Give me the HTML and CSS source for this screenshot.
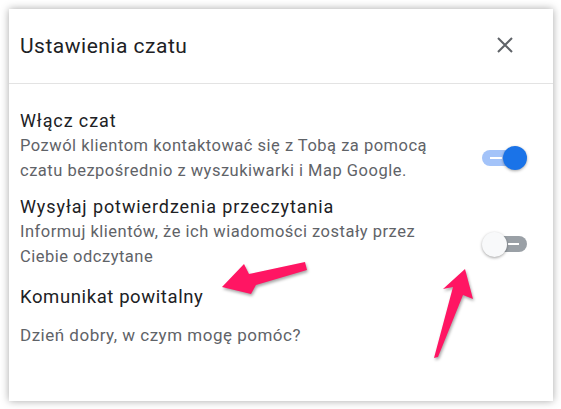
FILE: index.html
```html
<!DOCTYPE html>
<html lang="pl">
<head>
    <meta charset="UTF-8">
    <meta name="viewport" content="width=device-width, initial-scale=1.0">
    <title>Ustawienia czatu</title>
    <link rel="stylesheet" href="styles.css">
</head>
<body>
    <div class="dialog">
        <header class="dialog-header">
            <h1 class="dialog-title">Ustawienia czatu</h1>
            <button class="close-btn" aria-label="Zamknij">
                <svg width="16" height="16" viewBox="0 0 16 16">
                    <path d="M1 1 L15 15 M15 1 L1 15" stroke="#5f6368" stroke-width="2" fill="none"/>
                </svg>
            </button>
        </header>

        <div class="dialog-body">
            <div class="setting-row first">
                <div class="setting-text">
                    <div class="setting-title">Włącz czat</div>
                    <div class="setting-desc">Pozwól klientom kontaktować się z Tobą za pomocą czatu bezpośrednio z wyszukiwarki i Map Google.</div>
                </div>
                <div class="toggle on">
                    <span class="toggle-track"><span class="toggle-mark"></span></span>
                    <span class="toggle-thumb"></span>
                </div>
            </div>

            <div class="setting-row">
                <div class="setting-text">
                    <div class="setting-title">Wysyłaj potwierdzenia przeczytania</div>
                    <div class="setting-desc">Informuj klientów, że ich wiadomości zostały przez Ciebie odczytane</div>
                </div>
                <div class="toggle">
                    <span class="toggle-track"><span class="toggle-mark"></span></span>
                    <span class="toggle-thumb"></span>
                </div>
            </div>

            <div class="setting-title welcome-title">Komunikat powitalny</div>
            <div class="welcome-text">Dzień dobry, w czym mogę pomóc?</div>
        </div>
    </div>

    <!-- annotation arrows drawn over the screenshot -->
    <svg class="arrows" width="561" height="409" viewBox="0 0 561 409">
        <polygon points="222,287 244,264 249,274 305,262 307,270 256,285 251,294" />
        <polygon points="465,269 443,289 453,287 434,358 438,357 463,295 473,299" />
    </svg>
</body>
</html>
```

FILE: styles.css
```css
* {
    margin: 0;
    padding: 0;
    box-sizing: border-box;
}

body {
    position: relative;
    background-color: #ffffff;
    font-family: Roboto, 'Liberation Sans', Arial, sans-serif;
    padding: 9px;
    width: 561px;
    height: 409px;
    overflow: hidden;
}

.dialog {
    width: 544px;
    height: 392px;
    background-color: #ffffff;
    box-shadow: 0 0 8px rgba(0, 0, 0, 0.35);
}

.dialog-header {
    display: flex;
    align-items: center;
    justify-content: space-between;
    height: 75px;
    padding: 0 40px 0 11px;
    border-bottom: 1px solid #e3e3e3;
}

.dialog-title {
    font-size: 21px;
    font-weight: 400;
    line-height: 24px;
    letter-spacing: 0.5px;
    color: #202124;
}

.close-btn {
    display: flex;
    background: none;
    border: none;
    padding: 0;
    margin-top: -3px;
}

.dialog-body {
    padding: 25px 26px 0 11px;
}

.setting-row {
    display: flex;
    align-items: center;
    justify-content: space-between;
    margin-top: 12px;
}

.setting-row.first {
    margin-top: 0;
}

.setting-text {
    width: 430px;
}

.setting-title {
    font-size: 18px;
    line-height: 24px;
    letter-spacing: 0.9px;
    color: #202124;
}

.setting-desc {
    font-size: 16.5px;
    line-height: 24.5px;
    letter-spacing: 0.5px;
    color: #5f6368;
    margin-top: 1px;
}

.toggle {
    position: relative;
    width: 45px;
    height: 25px;
    margin-top: 24px;
}

.toggle-track {
    position: absolute;
    left: 3px;
    top: 4px;
    width: 42px;
    height: 16px;
    border-radius: 8px;
    background-color: #9aa0a6;
}

.toggle-mark {
    position: absolute;
    right: 8px;
    top: 7px;
    width: 11px;
    height: 2px;
    background-color: #ffffff;
}

.toggle-thumb {
    position: absolute;
    left: 0;
    top: 0;
    width: 25px;
    height: 25px;
    border-radius: 50%;
    background-color: #f8f9fa;
    box-shadow: 0 1px 3px rgba(0, 0, 0, 0.35);
}

.toggle.on .toggle-track {
    left: 0;
    background-color: #a3c3f9;
}

.toggle.on .toggle-mark {
    left: 8px;
    right: auto;
    width: 12px;
}

.toggle.on .toggle-thumb {
    left: 21px;
    width: 24px;
    height: 24px;
    background-color: #1a73e8;
}

.welcome-title {
    font-size: 18.5px;
    letter-spacing: 0.6px;
    margin-top: 16px;
}

.welcome-text {
    font-size: 17px;
    line-height: 24px;
    letter-spacing: 0.5px;
    color: #5f6368;
    margin-top: 14px;
}

.arrows {
    position: absolute;
    left: 0;
    top: 0;
    pointer-events: none;
}

.arrows polygon {
    fill: #ff1563;
    filter: drop-shadow(1px 2px 1.5px rgba(0, 0, 0, 0.35));
}
```
